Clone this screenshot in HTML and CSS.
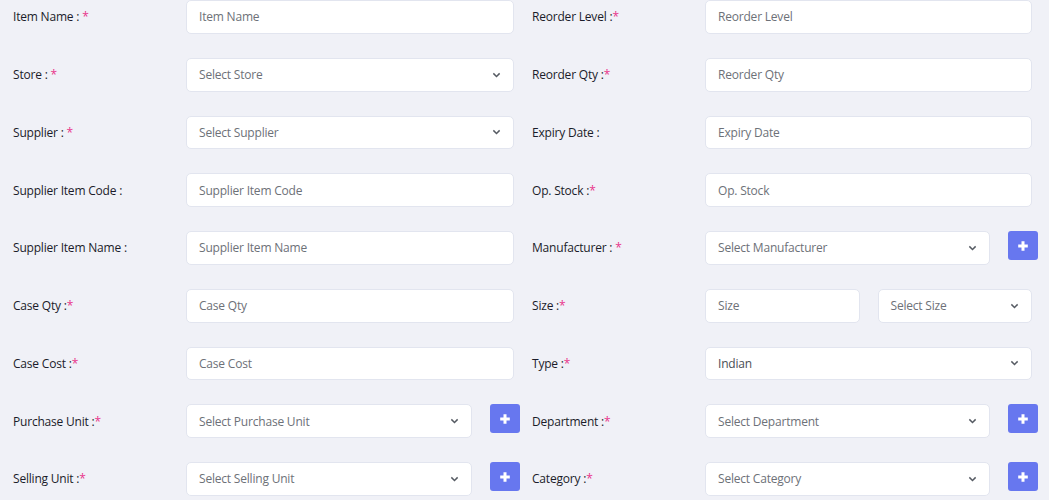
FILE: index.html
```html
<!DOCTYPE html>
<html>
<head>
<meta charset="utf-8">
<link rel="stylesheet" href="styles.css">
</head>
<body>
<div class="form">
  <div class="col left">
    <div class="row"><label class="lbl">Item Name : <span class="req">*</span></label><div class="field"><input class="ctl" placeholder="Item Name"></div></div>
    <div class="row"><label class="lbl">Store : <span class="req">*</span></label><div class="field"><div class="ctl sel">Select Store<svg class="chev" viewBox="0 0 10 6"><path d="M1.5 1.2 5 4.6 8.5 1.2"/></svg></div></div></div>
    <div class="row"><label class="lbl">Supplier : <span class="req">*</span></label><div class="field"><div class="ctl sel">Select Supplier<svg class="chev" viewBox="0 0 10 6"><path d="M1.5 1.2 5 4.6 8.5 1.2"/></svg></div></div></div>
    <div class="row"><label class="lbl">Supplier Item Code :</label><div class="field"><input class="ctl" placeholder="Supplier Item Code"></div></div>
    <div class="row"><label class="lbl">Supplier Item Name :</label><div class="field"><input class="ctl" placeholder="Supplier Item Name"></div></div>
    <div class="row"><label class="lbl">Case Qty :<span class="req">*</span></label><div class="field"><input class="ctl" placeholder="Case Qty"></div></div>
    <div class="row"><label class="lbl">Case Cost :<span class="req">*</span></label><div class="field"><input class="ctl" placeholder="Case Cost"></div></div>
    <div class="row"><label class="lbl">Purchase Unit :<span class="req">*</span></label><div class="field add"><div class="ctl sel">Select Purchase Unit<svg class="chev" viewBox="0 0 10 6"><path d="M1.5 1.2 5 4.6 8.5 1.2"/></svg></div><button class="plus"><svg viewBox="0 0 10 10"><path d="M5 1v8M1 5h8"/></svg></button></div></div>
    <div class="row"><label class="lbl">Selling Unit :<span class="req">*</span></label><div class="field add"><div class="ctl sel">Select Selling Unit<svg class="chev" viewBox="0 0 10 6"><path d="M1.5 1.2 5 4.6 8.5 1.2"/></svg></div><button class="plus"><svg viewBox="0 0 10 10"><path d="M5 1v8M1 5h8"/></svg></button></div></div>
  </div>
  <div class="col right">
    <div class="row"><label class="lbl">Reorder Level :<span class="req">*</span></label><div class="field"><input class="ctl" placeholder="Reorder Level"></div></div>
    <div class="row"><label class="lbl">Reorder Qty :<span class="req">*</span></label><div class="field"><input class="ctl" placeholder="Reorder Qty"></div></div>
    <div class="row"><label class="lbl">Expiry Date :</label><div class="field"><input class="ctl" placeholder="Expiry Date"></div></div>
    <div class="row"><label class="lbl">Op. Stock :<span class="req">*</span></label><div class="field"><input class="ctl" placeholder="Op. Stock"></div></div>
    <div class="row"><label class="lbl">Manufacturer : <span class="req">*</span></label><div class="field add"><div class="ctl sel">Select Manufacturer<svg class="chev" viewBox="0 0 10 6"><path d="M1.5 1.2 5 4.6 8.5 1.2"/></svg></div><button class="plus"><svg viewBox="0 0 10 10"><path d="M5 1v8M1 5h8"/></svg></button></div></div>
    <div class="row"><label class="lbl">Size :<span class="req">*</span></label><div class="field pair"><input class="ctl" placeholder="Size"><div class="ctl sel">Select Size<svg class="chev" viewBox="0 0 10 6"><path d="M1.5 1.2 5 4.6 8.5 1.2"/></svg></div></div></div>
    <div class="row"><label class="lbl">Type :<span class="req">*</span></label><div class="field"><div class="ctl sel val">Indian<svg class="chev" viewBox="0 0 10 6"><path d="M1.5 1.2 5 4.6 8.5 1.2"/></svg></div></div></div>
    <div class="row"><label class="lbl">Department :<span class="req">*</span></label><div class="field add"><div class="ctl sel">Select Department<svg class="chev" viewBox="0 0 10 6"><path d="M1.5 1.2 5 4.6 8.5 1.2"/></svg></div><button class="plus"><svg viewBox="0 0 10 10"><path d="M5 1v8M1 5h8"/></svg></button></div></div>
    <div class="row"><label class="lbl">Category :<span class="req">*</span></label><div class="field add"><div class="ctl sel">Select Category<svg class="chev" viewBox="0 0 10 6"><path d="M1.5 1.2 5 4.6 8.5 1.2"/></svg></div><button class="plus"><svg viewBox="0 0 10 10"><path d="M5 1v8M1 5h8"/></svg></button></div></div>
  </div>
</div>
</body>
</html>
```
FILE: styles.css
```css
* { box-sizing: border-box; }
html, body { margin: 0; padding: 0; }
body {
  background: #f0f1f7;
  font-family: "Open Sans", "Liberation Sans", sans-serif;
  color: #1b1c2a;
  overflow: hidden;
}
.form {
  display: flex;
  gap: 18px;
  padding: 0 17px 0 13px;
}
.col {
  display: flex;
  flex-direction: column;
  gap: 24px;
}
.left { width: 501px; flex: none; }
.right { flex: 1; }
.row {
  display: grid;
  grid-template-columns: 173px 1fr;
  align-items: center;
  height: 33.75px;
}
.lbl {
  font-size: 12px;
  letter-spacing: -0.2px;
  color: #1b1c2a;
  white-space: nowrap;
}
.req { color: #e8348a; }
.field { display: flex; align-items: flex-start; height: 100%; }
.ctl {
  flex: 1;
  min-width: 0;
  height: 33.75px;
  background: #fff;
  border: 1px solid #e2e5ef;
  border-radius: 5px;
  padding: 0 12px;
  font-family: inherit;
  font-size: 12px;
  letter-spacing: -0.2px;
  color: #6d7178;
  outline: none;
}
.ctl::placeholder { color: #6d7178; }
.sel {
  display: flex;
  align-items: center;
  justify-content: space-between;
}
.sel.val { color: #4a4e55; }
.chev {
  width: 9px;
  height: 6px;
  fill: none;
  stroke: #555a62;
  stroke-width: 1.6;
}
.add .ctl { margin-right: 18px; }
.plus {
  flex: none;
  width: 30px;
  height: 29px;
  margin-right: -6px;
  background: #6777ef;
  border: none;
  border-radius: 3px;
  display: flex;
  align-items: center;
  justify-content: center;
  padding: 0;
}
.plus svg {
  width: 12px;
  height: 12px;
  fill: none;
  stroke: #fff;
  stroke-width: 2.5;
}
.pair { gap: 18px; }
.pair .ctl { flex: 1 1 0; }
```
